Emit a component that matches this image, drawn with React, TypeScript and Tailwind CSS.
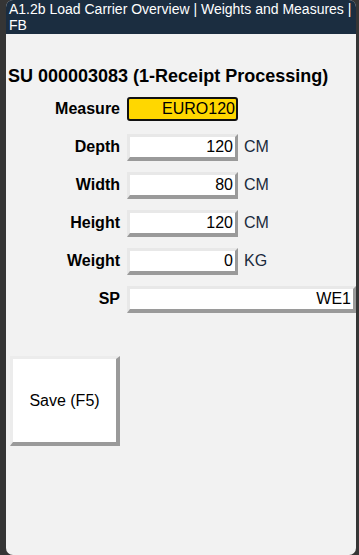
import React from "react";

const font = { fontFamily: '"Liberation Sans", Arial, sans-serif' };

function Field({
  label,
  value,
  unit,
  wide,
  highlight,
}: {
  label: string;
  value: string;
  unit?: string;
  wide?: boolean;
  highlight?: boolean;
}) {
  return (
    <div className="flex items-center h-[38px]">
      <div className="w-[121px] shrink-0 text-right text-[16px] font-bold text-black pr-[7px]">{label}</div>
      {highlight ? (
        <div className="w-[111px] h-[24px] bg-[#ffd700] border-2 border-[#111] rounded-[3px] text-right text-[16px] leading-[20px] pr-[1px] text-black">
          {value}
        </div>
      ) : (
        <div
          className={`${wide ? "flex-1" : "w-[111px]"} h-[27px] bg-white border-t-[3px] border-l-[3px] border-r-[3px] border-b-[4px] border-t-[#e8e8e8] border-l-[#e8e8e8] border-r-[#9a9a9a] border-b-[#9a9a9a] text-right text-[16px] leading-[20px] pr-[2px] text-black`}
        >
          {value}
        </div>
      )}
      {unit && <div className="ml-[6px] text-[16px] text-[#1a2a3c]">{unit}</div>}
    </div>
  );
}

export default function App() {
  return (
    <div className="w-[359px] h-[555px] bg-[#353535] pl-[6px] pr-[3px]" style={font}>
      <div className="h-full flex flex-col bg-[#f2f2f2] rounded-[7px] overflow-hidden">
        <div className="bg-[#1b2d40] text-white text-[14px] leading-[16px] pl-[3px] pt-[1px] h-[34px] shrink-0">
          A1.2b Load Carrier Overview | Weights and Measures | FB
        </div>
        <div className="pt-[31px]">
          <div className="px-[2px] text-[18px] font-bold text-black leading-[22px]">
            SU 000003083 (1-Receipt Processing)
          </div>
          <div className="mt-[3px]">
            <Field label="Measure" value="EURO120" highlight />
            <Field label="Depth" value="120" unit="CM" />
            <Field label="Width" value="80" unit="CM" />
            <Field label="Height" value="120" unit="CM" />
            <Field label="Weight" value="0" unit="KG" />
            <Field label="SP" value="WE1" wide />
          </div>
          <div className="mt-[38px] pl-[4px]">
            <button className="w-[110px] h-[90px] bg-white border-t-[3px] border-l-[3px] border-r-[4px] border-b-[4px] border-t-[#ececec] border-l-[#ececec] border-r-[#9a9a9a] border-b-[#9a9a9a] text-[16px] text-black">
              Save (F5)
            </button>
          </div>
        </div>
      </div>
    </div>
  );
}
